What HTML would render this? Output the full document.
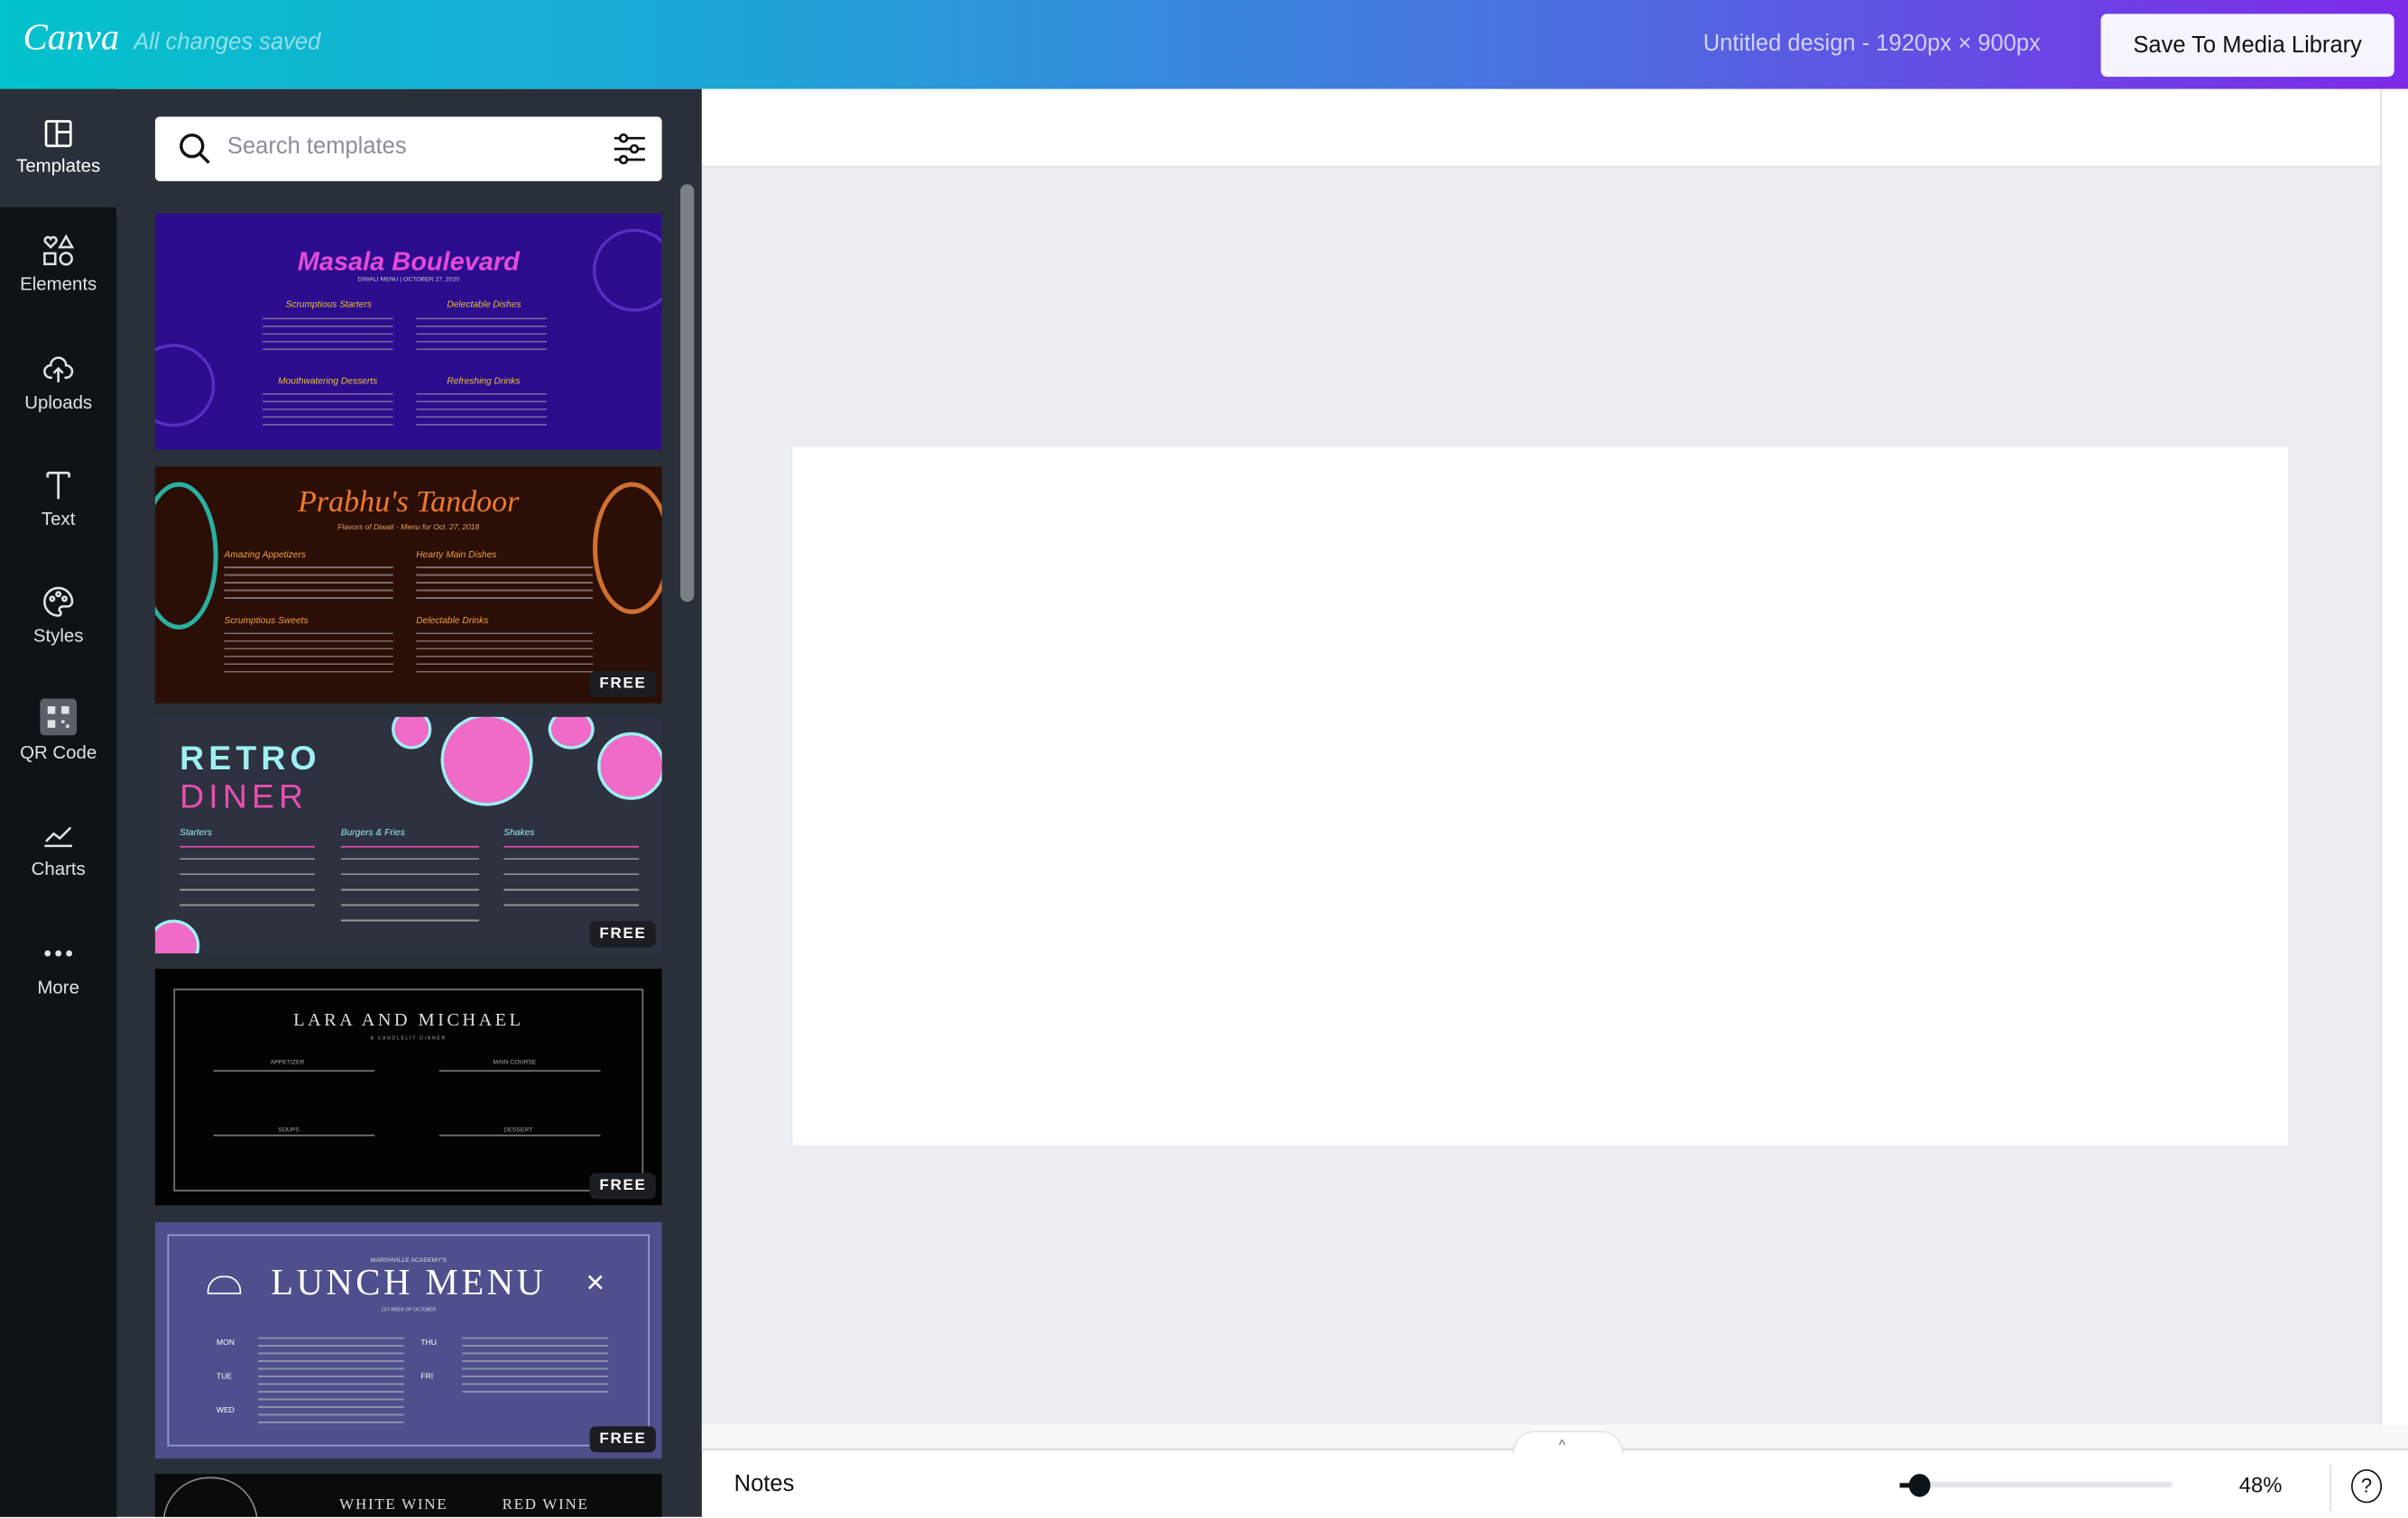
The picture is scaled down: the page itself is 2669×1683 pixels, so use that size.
<!DOCTYPE html>
<html><head><meta charset="utf-8">
<style>
html,body{margin:0;padding:0;width:2669px;height:1683px;overflow:hidden;background:#fff;font-family:"Liberation Sans",sans-serif;}
#w{position:absolute;left:0;top:0;width:1568px;height:988.7px;transform:scale(1.70217);transform-origin:0 0;overflow:hidden;}
.a{position:absolute;}
.top{left:0;top:0;width:1568px;height:58px;background:linear-gradient(90deg,#03c3cc 0%,#1ea6d6 30%,#4b6fe0 65%,#6a45e4 85%,#7d2ae8 100%);}
.nav{left:0;top:58px;width:76px;height:930px;background:#0e1318;}
.navact{left:0;top:58px;width:76px;height:77px;background:#293039;}
.ni{position:absolute;left:0;width:76px;text-align:center;color:#dfe2e6;font-size:12px;}
.ni svg{display:block;margin:0 auto 4px;}
.panel{left:76px;top:58px;width:381px;height:930px;background:#293039;}
.th{position:absolute;left:101px;width:330px;height:154px;overflow:hidden;}
.free{position:absolute;right:4px;bottom:4px;background:#1b1e22;color:#fff;font-size:10px;font-weight:bold;letter-spacing:1px;padding:3px 6px;border-radius:4px;}
.ln{position:absolute;height:2px;background:rgba(255,255,255,.55);}
</style></head><body><div id="w">
<div class="a top"></div>
<div class="a" style="left:15px;top:12px;color:#fff;font-family:'Liberation Serif',serif;font-style:italic;font-size:24px;">Canva</div>
<div class="a" style="left:87px;top:19px;color:rgba(255,255,255,.55);font-style:italic;font-size:15px;">All changes saved</div>
<div class="a" style="left:1109px;top:20px;color:rgba(255,255,255,.72);font-size:15px;">Untitled design - 1920px × 900px</div>
<div class="a" style="left:1368px;top:9px;width:191px;height:41px;background:#f6f4fd;border-radius:4px;color:#111;font-size:15px;text-align:center;line-height:41px;">Save To Media Library</div>

<div class="a nav"></div>
<div class="a panel"></div>
<div class="a navact"></div>
<div class="a" style="left:0;top:135px;width:76px;height:853px;background:#0e1318;border-top-right-radius:6px;"></div>
<div class="ni" style="top:77px;color:#fff;"><svg width="20" height="20" viewBox="0 0 20 20" fill="none" stroke="#fff" stroke-width="1.6"><rect x="2" y="2" width="16" height="16" rx="1"/><path d="M9 2v16M9 9h9"/></svg>Templates</div>
<div class="ni" style="top:152px;"><svg width="22" height="22" viewBox="0 0 22 22" fill="none" stroke="#dfe2e6" stroke-width="1.5"><path d="M6 9L2.5 5.5a2 2 0 0 1 3.5-2 2 2 0 0 1 3.5 2z"/><path d="M16 2l4 7h-8z"/><rect x="2" y="13" width="7" height="7"/><circle cx="16" cy="16.5" r="3.8"/></svg>Elements</div>
<div class="ni" style="top:229px;"><svg width="22" height="22" viewBox="0 0 22 22" fill="none" stroke="#dfe2e6" stroke-width="1.5"><path d="M7 17H6a4 4 0 0 1 0-8 5 5 0 0 1 10 0 4 4 0 0 1 0 8h-1M11 20v-9M8 14l3-3 3 3"/></svg>Uploads</div>
<div class="ni" style="top:305px;"><svg width="22" height="22" viewBox="0 0 22 22" fill="none" stroke="#dfe2e6" stroke-width="1.6"><path d="M4 3h14M11 3v17M4 3v3M18 3v3"/></svg>Text</div>
<div class="ni" style="top:381px;"><svg width="22" height="22" viewBox="0 0 22 22" fill="none" stroke="#dfe2e6" stroke-width="1.5"><path d="M11 2a9 9 0 0 0 0 18c2 0 2-2 1-3s0-3 2-3h3a3 3 0 0 0 3-3 9 9 0 0 0-9-9z"/><circle cx="7" cy="9" r="1.3"/><circle cx="11" cy="6" r="1.3"/><circle cx="15" cy="9" r="1.3"/></svg>Styles</div>
<div class="ni" style="top:455px;"><svg width="24" height="24" viewBox="0 0 24 24"><rect x="0" y="0" width="24" height="24" rx="3" fill="#5b6068"/><path d="M5 5h5v5H5zM14 5h5v5h-5zM5 14h5v5H5zM14 14h2v2h-2zM17 17h2v2h-2z" fill="#dfe2e6"/></svg>QR Code</div>
<div class="ni" style="top:533px;"><svg width="22" height="22" viewBox="0 0 22 22" fill="none" stroke="#dfe2e6" stroke-width="1.5"><path d="M2 18h18M3 15l5-5 4 3 7-7"/></svg>Charts</div>
<div class="ni" style="top:610px;"><svg width="22" height="22" viewBox="0 0 22 22" fill="#dfe2e6"><circle cx="4" cy="11" r="2"/><circle cx="11" cy="11" r="2"/><circle cx="18" cy="11" r="2"/></svg>More</div>

<div class="a" style="left:101px;top:76px;width:330px;height:42px;background:#fff;border-radius:3px;"></div>
<svg class="a" style="left:116px;top:86px" width="22" height="22" viewBox="0 0 22 22" fill="none" stroke="#111" stroke-width="2"><circle cx="9" cy="9" r="7"/><path d="M14 14l6 6"/></svg>
<div class="a" style="left:148px;top:87px;color:#8a8f96;font-size:15px;">Search templates</div>
<svg class="a" style="left:399px;top:86px" width="22" height="22" viewBox="0 0 22 22" fill="none" stroke="#111" stroke-width="1.6"><path d="M1 4h20M1 11h20M1 18h20"/><circle cx="7" cy="4" r="2.3" fill="#fff"/><circle cx="14" cy="11" r="2.3" fill="#fff"/><circle cx="7" cy="18" r="2.3" fill="#fff"/></svg>
<div class="a" style="left:443px;top:120px;width:9px;height:272px;background:#7a7f86;border-radius:5px;"></div>
<div class="a" style="left:457px;top:485px;width:12px;height:78px;background:#293039;border-radius:0 8px 8px 0;color:#fff;font-size:11px;line-height:78px;text-align:center;">‹</div>

<div class="th" style="top:139px;background:#2c0d8e;">
<div class="a" style="left:0;top:22px;width:330px;text-align:center;color:#e54ad8;font-size:17px;font-weight:bold;font-style:italic;">Masala Boulevard</div>
<div class="a" style="left:0;top:40px;width:330px;text-align:center;color:#ccc;font-size:4px;">DIWALI MENU | OCTOBER 27, 2020</div>
<div class="a" style="left:85px;top:57px;color:#e8c13a;font-size:6px;font-style:italic;">Scrumptious Starters</div>
<div class="a" style="left:190px;top:57px;color:#e8c13a;font-size:6px;font-style:italic;">Delectable Dishes</div>
<div class="a" style="left:80px;top:107px;color:#e8c13a;font-size:6px;font-style:italic;">Mouthwatering Desserts</div>
<div class="a" style="left:190px;top:107px;color:#e8c13a;font-size:6px;font-style:italic;">Refreshing Drinks</div>
<div class="ln" style="left:70px;top:68px;width:85px;height:25px;background:repeating-linear-gradient(#aaa 0 1px,transparent 1px 5px);opacity:.6"></div>
<div class="ln" style="left:170px;top:68px;width:85px;height:25px;background:repeating-linear-gradient(#aaa 0 1px,transparent 1px 5px);opacity:.6"></div>
<div class="ln" style="left:70px;top:117px;width:85px;height:25px;background:repeating-linear-gradient(#aaa 0 1px,transparent 1px 5px);opacity:.6"></div>
<div class="ln" style="left:170px;top:117px;width:85px;height:25px;background:repeating-linear-gradient(#aaa 0 1px,transparent 1px 5px);opacity:.6"></div>
<div class="a" style="left:-15px;top:85px;width:50px;height:50px;border:2px solid #5530c0;border-radius:50%;"></div>
<div class="a" style="left:285px;top:10px;width:50px;height:50px;border:2px solid #5530c0;border-radius:50%;"></div>
</div>
<div class="th" style="top:304px;background:#2b0f07;">
<div class="a" style="left:0;top:12px;width:330px;text-align:center;color:#f07a2a;font-size:20px;font-style:italic;font-family:'Liberation Serif',serif;">Prabhu's Tandoor</div>
<div class="a" style="left:0;top:37px;width:330px;text-align:center;color:#e0a060;font-size:5px;font-style:italic;">Flavors of Diwali - Menu for Oct. 27, 2018</div>
<div class="a" style="left:45px;top:55px;color:#f0a040;font-size:6px;font-style:italic;">Amazing Appetizers</div>
<div class="a" style="left:170px;top:55px;color:#f0a040;font-size:6px;font-style:italic;">Hearty Main Dishes</div>
<div class="a" style="left:45px;top:98px;color:#f0a040;font-size:6px;font-style:italic;">Scrumptious Sweets</div>
<div class="a" style="left:170px;top:98px;color:#f0a040;font-size:6px;font-style:italic;">Delectable Drinks</div>
<div class="ln" style="left:45px;top:65px;width:110px;height:22px;background:repeating-linear-gradient(#ccc 0 1px,transparent 1px 5px);opacity:.5"></div>
<div class="ln" style="left:170px;top:65px;width:115px;height:22px;background:repeating-linear-gradient(#ccc 0 1px,transparent 1px 5px);opacity:.5"></div>
<div class="ln" style="left:45px;top:108px;width:110px;height:30px;background:repeating-linear-gradient(#ccc 0 1px,transparent 1px 5px);opacity:.5"></div>
<div class="ln" style="left:170px;top:108px;width:115px;height:30px;background:repeating-linear-gradient(#ccc 0 1px,transparent 1px 5px);opacity:.5"></div>
<div class="a" style="left:-10px;top:10px;width:45px;height:90px;border:3px solid #2ab0a0;border-radius:50%;"></div>
<div class="a" style="left:285px;top:10px;width:45px;height:80px;border:3px solid #d07030;border-radius:50%;"></div>
<div class="free">FREE</div>
</div>
<div class="th" style="top:467px;background:#2d3140;">
<div class="a" style="left:16px;top:14px;color:#9ef0f0;font-size:22px;font-weight:bold;letter-spacing:3px;">RETRO</div>
<div class="a" style="left:16px;top:39px;color:#e84fb0;font-size:22px;letter-spacing:3px;">DINER</div>
<div class="a" style="left:186px;top:-2px;width:56px;height:56px;border-radius:50%;background:#f06ac8;border:2px solid #9ef0f0;"></div>
<div class="a" style="left:288px;top:10px;width:40px;height:40px;border-radius:50%;background:#f06ac8;border:2px solid #9ef0f0;"></div>
<div class="a" style="left:154px;top:-5px;width:22px;height:22px;border-radius:50%;background:#f06ac8;border:2px solid #9ef0f0;"></div>
<div class="a" style="left:256px;top:-5px;width:26px;height:22px;border-radius:50%;background:#f06ac8;border:2px solid #9ef0f0;"></div>
<div class="a" style="left:-5px;top:132px;width:30px;height:30px;border-radius:50%;background:#f06ac8;border:2px solid #9ef0f0;"></div>
<div class="a" style="left:16px;top:73px;color:#9ef0f0;font-size:6px;font-style:italic;">Starters</div>
<div class="a" style="left:121px;top:73px;color:#9ef0f0;font-size:6px;font-style:italic;">Burgers &amp; Fries</div>
<div class="a" style="left:227px;top:73px;color:#9ef0f0;font-size:6px;font-style:italic;">Shakes</div>
<div class="ln" style="left:16px;top:84px;width:88px;height:1px;background:#e84fb0"></div>
<div class="ln" style="left:121px;top:84px;width:90px;height:1px;background:#e84fb0"></div>
<div class="ln" style="left:227px;top:84px;width:88px;height:1px;background:#e84fb0"></div>
<div class="ln" style="left:16px;top:92px;width:88px;height:36px;background:repeating-linear-gradient(#ddd 0 1px,transparent 1px 10px);opacity:.6"></div>
<div class="ln" style="left:121px;top:92px;width:90px;height:46px;background:repeating-linear-gradient(#ddd 0 1px,transparent 1px 10px);opacity:.6"></div>
<div class="ln" style="left:227px;top:92px;width:88px;height:36px;background:repeating-linear-gradient(#ddd 0 1px,transparent 1px 10px);opacity:.6"></div>
<div class="free">FREE</div>
</div>
<div class="th" style="top:631px;background:#030303;">
<div class="a" style="left:12px;top:13px;width:304px;height:130px;border:1px solid #777;"></div>
<div class="a" style="left:0;top:26px;width:330px;text-align:center;color:#ddd;font-size:12px;letter-spacing:2px;font-family:'Liberation Serif',serif;">LARA AND MICHAEL</div>
<div class="a" style="left:0;top:43px;width:330px;text-align:center;color:#aaa;font-size:3px;letter-spacing:1px;">A CANDLELIT DINNER</div>
<div class="a" style="left:75px;top:58px;color:#aaa;font-size:4px;">APPETIZER</div>
<div class="a" style="left:220px;top:58px;color:#aaa;font-size:4px;">MAIN COURSE</div>
<div class="a" style="left:80px;top:102px;color:#aaa;font-size:4px;">SOUPS</div>
<div class="a" style="left:227px;top:102px;color:#aaa;font-size:4px;">DESSERT</div>
<div class="ln" style="left:38px;top:66px;width:105px;height:1px;background:#777"></div>
<div class="ln" style="left:185px;top:66px;width:105px;height:1px;background:#777"></div>
<div class="ln" style="left:38px;top:108px;width:105px;height:1px;background:#777"></div>
<div class="ln" style="left:185px;top:108px;width:105px;height:1px;background:#777"></div>
<div class="free">FREE</div>
</div>
<div class="th" style="top:796px;background:#4e4f8c;">
<div class="a" style="left:8px;top:8px;width:312px;height:136px;border:1px solid #9aa0d0;"></div>
<div class="a" style="left:0;top:22px;width:330px;text-align:center;color:#ddd;font-size:4px;">MARSHVILLE ACADEMY'S</div>
<div class="a" style="left:0;top:27px;width:330px;text-align:center;color:#fff;font-size:24px;letter-spacing:2px;font-family:'Liberation Serif',serif;">LUNCH MENU</div>
<div class="a" style="left:0;top:55px;width:330px;text-align:center;color:#ddd;font-size:3px;">1ST WEEK OF OCTOBER</div>
<div class="a" style="left:34px;top:35px;width:20px;height:10px;border:1.5px solid #fff;border-radius:10px 10px 0 0;"></div>
<div class="a" style="left:280px;top:30px;color:#fff;font-size:16px;">✕</div>
<div class="a" style="left:40px;top:76px;color:#fff;font-size:5px;">MON</div>
<div class="a" style="left:40px;top:98px;color:#fff;font-size:5px;">TUE</div>
<div class="a" style="left:40px;top:120px;color:#fff;font-size:5px;">WED</div>
<div class="a" style="left:173px;top:76px;color:#fff;font-size:5px;">THU</div>
<div class="a" style="left:173px;top:98px;color:#fff;font-size:5px;">FRI</div>
<div class="ln" style="left:67px;top:75px;width:95px;height:60px;background:repeating-linear-gradient(#ddd 0 1px,transparent 1px 5px);opacity:.45"></div>
<div class="ln" style="left:200px;top:75px;width:95px;height:38px;background:repeating-linear-gradient(#ddd 0 1px,transparent 1px 5px);opacity:.45"></div>
<div class="free">FREE</div>
</div>
<div class="th" style="top:960px;height:28px;background:#0b0b0b;">
<div class="a" style="left:120px;top:15px;color:#ddd;font-size:10px;font-family:'Liberation Serif',serif;letter-spacing:1px;">WHITE WINE</div>
<div class="a" style="left:226px;top:15px;color:#ddd;font-size:10px;font-family:'Liberation Serif',serif;letter-spacing:1px;">RED WINE</div>
<div class="a" style="left:5px;top:2px;width:60px;height:30px;border:1px solid #888;border-radius:30px 30px 0 0;"></div>
</div>

<div class="a" style="left:457px;top:58px;width:1111px;height:50px;background:#fff;border-bottom:1px solid #dde0e4;"></div>
<div class="a" style="left:457px;top:109px;width:1093px;height:819px;background:#ebeef1;"></div>
<div class="a" style="left:1550px;top:58px;width:18px;height:887px;background:#fff;border-left:1px solid #dde0e4;"></div>
<div class="a" style="left:457px;top:928px;width:1111px;height:15px;background:#f8f8f9;border-bottom:2px solid #e1e3e6;"></div>
<div class="a" style="left:516px;top:291px;width:974px;height:455px;background:#fff;box-shadow:0 0 1px rgba(0,0,0,.15);"></div>
<div class="a" style="left:985px;top:932px;width:70px;height:14px;background:#fff;border:1px solid #e1e3e6;border-bottom:none;border-radius:14px 14px 0 0;"></div>
<div class="a" style="left:1015px;top:936px;color:#666;font-size:9px;">^</div>
<div class="a" style="left:478px;top:958px;color:#111;font-size:15px;">Notes</div>
<div class="a" style="left:1237px;top:965px;width:178px;height:4px;background:#e3e5e8;border-radius:2px;"></div>
<div class="a" style="left:1237px;top:966px;width:8px;height:3px;background:#111;"></div>
<div class="a" style="left:1243px;top:960px;width:14px;height:15px;background:#0e1318;border-radius:50%;"></div>
<div class="a" style="left:1458px;top:959px;color:#111;font-size:14px;">48%</div>
<div class="a" style="left:1517px;top:954px;width:1px;height:30px;background:#dde0e4;"></div>
<div class="a" style="left:1531px;top:957px;width:18px;height:20px;border:1.5px solid #111;border-radius:50%;color:#111;font-size:13px;text-align:center;line-height:20px;">?</div>
</div></body></html>
